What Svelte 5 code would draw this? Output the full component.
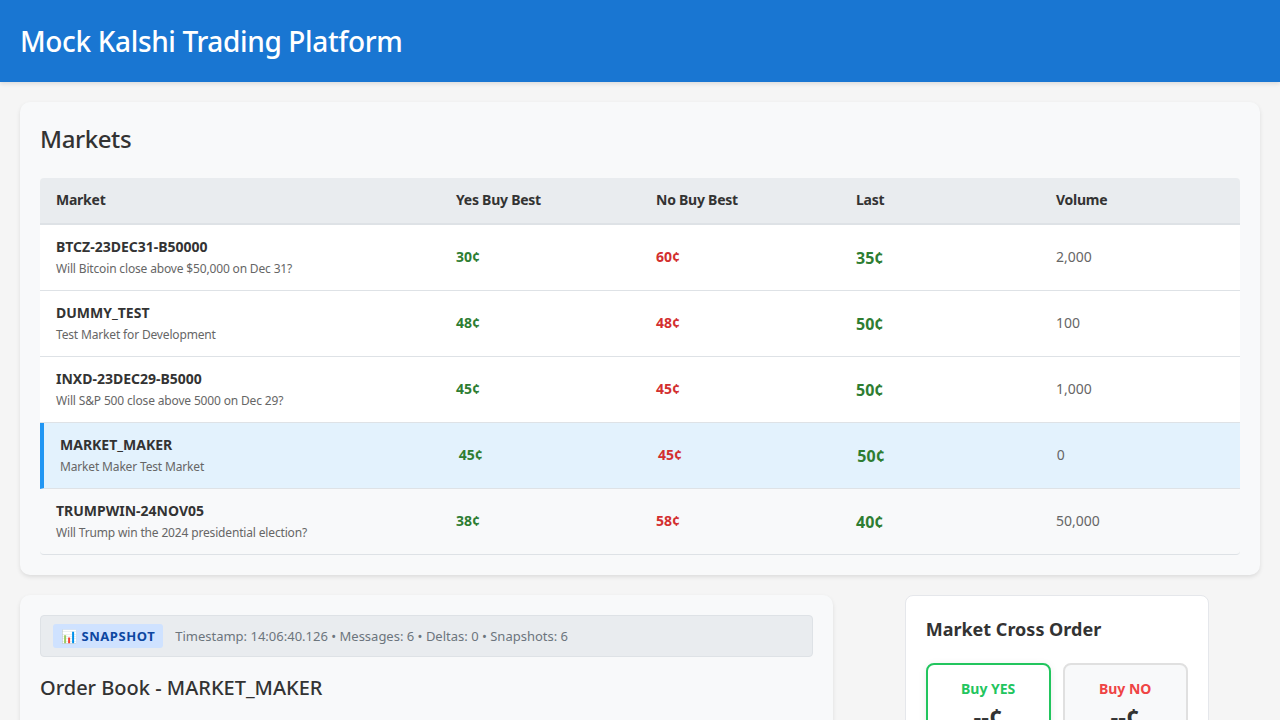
<script>
	const markets = [
		{ id: 'BTCZ-23DEC31-B50000', title: 'Will Bitcoin close above $50,000 on Dec 31?', yes: 30, no: 60, last: 35, volume: '2,000' },
		{ id: 'DUMMY_TEST', title: 'Test Market for Development', yes: 48, no: 48, last: 50, volume: '100' },
		{ id: 'INXD-23DEC29-B5000', title: 'Will S&P 500 close above 5000 on Dec 29?', yes: 45, no: 45, last: 50, volume: '1,000' },
		{ id: 'MARKET_MAKER', title: 'Market Maker Test Market', yes: 45, no: 45, last: 50, volume: '0' },
		{ id: 'TRUMPWIN-24NOV05', title: 'Will Trump win the 2024 presidential election?', yes: 38, no: 58, last: 40, volume: '50,000' }
	];
	let selected = 'MARKET_MAKER';
</script>

<header class="topbar">
	<h1>Mock Kalshi Trading Platform</h1>
</header>

<main class="page">
	<section class="panel">
		<h2>Markets</h2>
		<div class="table">
			<div class="row head">
				<div class="cell">Market</div>
				<div class="cell">Yes Buy Best</div>
				<div class="cell">No Buy Best</div>
				<div class="cell">Last</div>
				<div class="cell">Volume</div>
			</div>
			{#each markets as m}
				<div class="row" class:selected={m.id === selected}>
					<div class="cell">
						<div class="ticker">{m.id}</div>
						<div class="desc">{m.title}</div>
					</div>
					<div class="cell yes">{m.yes}¢</div>
					<div class="cell no">{m.no}¢</div>
					<div class="cell last">{m.last}¢</div>
					<div class="cell vol">{m.volume}</div>
				</div>
			{/each}
		</div>
	</section>

	<div class="lower">
		<section class="panel book">
			<div class="status">
				<span class="badge">📊 SNAPSHOT</span>
				<span class="meta">Timestamp: 14:06:40.126 • Messages: 6 • Deltas: 0 • Snapshots: 6</span>
			</div>
			<h3>Order Book - MARKET_MAKER</h3>
		</section>

		<div class="side">
			<section class="order">
				<h3>Market Cross Order</h3>
				<div class="sides">
					<button class="pick active">
						<span class="lbl buy-yes">Buy YES</span>
						<span class="price">--¢</span>
					</button>
					<button class="pick">
						<span class="lbl buy-no">Buy NO</span>
						<span class="price">--¢</span>
					</button>
				</div>
			</section>
		</div>
	</div>
</main>

<style>
	:global(body) {
		background: #f5f5f5;
		font-family: "Noto Sans", sans-serif;
		color: #333;
	}
	.topbar {
		background: #1976d2;
		color: #fff;
		padding: 20px;
		box-shadow: 0 2px 4px rgba(0, 0, 0, 0.1);
	}
	h1 {
		margin: 0;
		font-size: 28px;
		font-weight: 500;
		line-height: 42px;
		letter-spacing: -0.36px;
	}
	.page {
		padding: 20px;
		display: flex;
		flex-direction: column;
		gap: 20px;
	}
	.panel {
		background: #f8f9fa;
		border-radius: 10px;
		padding: 20px;
		box-shadow: 0 2px 4px rgba(0, 0, 0, 0.1);
	}
	h2 {
		margin: 0 0 20px;
		font-size: 24px;
		font-weight: 500;
		line-height: 34px;
		padding-bottom: 2px;
		letter-spacing: -0.4px;
		color: #333;
	}
	.table {
		display: flex;
		flex-direction: column;
	}
	.row {
		display: grid;
		grid-template-columns: 2fr 1fr 1fr 1fr 1fr;
		align-items: center;
		height: 66px;
		box-sizing: border-box;
		background: #fff;
		font-size: 14px;
		border-bottom: 1px solid #dee2e6;
	}
	.row:last-child {
		background: #f8f9fa;
		border-radius: 0 0 4px 4px;
	}
	.row.head {
		height: 47px;
		background: #e9ecef;
		font-weight: 700;
		color: #333;
		border-bottom: 2px solid #dee2e6;
		border-radius: 4px 4px 0 0;
		letter-spacing: -0.25px;
	}
	.row.selected {
		background: #e3f2fd;
		border-left: 4px solid #2196f3;
	}
	.cell {
		padding: 0 16px 2px;
	}
	.ticker {
		font-weight: 700;
		font-size: 14px;
		color: #333;
	}
	.desc {
		font-size: 12px;
		color: #666;
		margin-top: 4px;
		letter-spacing: -0.16px;
	}
	.yes {
		color: #2e7d32;
		font-weight: 700;
	}
	.no {
		color: #d32f2f;
		font-weight: 700;
	}
	.cell.last {
		color: #2e7d32;
		font-weight: 700;
		font-size: 16px;
		padding-bottom: 0;
	}
	.vol {
		color: #666;
	}
	.lower {
		display: grid;
		grid-template-columns: 2fr 1fr;
		gap: 20px;
		align-items: start;
	}
	.book {
		min-height: 400px;
	}
	.status {
		display: flex;
		align-items: center;
		gap: 12px;
		background: #e9ecef;
		border: 1px solid #dee2e6;
		border-radius: 4px;
		padding: 8px 12px;
		margin-bottom: 16px;
	}
	.badge {
		background: #cfe2ff;
		color: #0d47a1;
		font-size: 13px;
		font-weight: 700;
		line-height: 24px;
		padding: 0 8px;
		border-radius: 3px;
		letter-spacing: 0.55px;
	}
	.meta {
		font-size: 13px;
		color: #6c757d;
	}
	h3 {
		margin: 0;
		font-size: 20px;
		font-weight: 500;
		line-height: 30px;
		color: #333;
	}
	.side {
		display: flex;
		justify-content: center;
	}
	.order {
		width: 304px;
		box-sizing: border-box;
		background: #fff;
		border: 1px solid #e5e7eb;
		border-radius: 8px;
		padding: 20px;
	}
	.order h3 {
		font-size: 18px;
		font-weight: 700;
		line-height: 27px;
		margin-bottom: 20px;
	}
	.sides {
		display: grid;
		grid-template-columns: 1fr 1fr;
		gap: 12px;
	}
	.pick {
		display: flex;
		flex-direction: column;
		align-items: center;
		background: #f8f9fa;
		border: 2px solid #e0e0e0;
		border-radius: 8px;
		padding: 14px 8px 16px;
		font-family: inherit;
	}
	.pick.active {
		background: #fff;
		border-color: #22c55e;
		box-shadow: 0 2px 8px rgba(0, 0, 0, 0.08);
	}
	.lbl {
		font-size: 14px;
		font-weight: 700;
	}
	.buy-yes {
		color: #22c55e;
	}
	.buy-no {
		color: #ef4444;
	}
	.price {
		font-size: 24px;
		font-weight: 700;
		line-height: 30px;
		margin-top: 4px;
		color: #333;
	}
</style>
